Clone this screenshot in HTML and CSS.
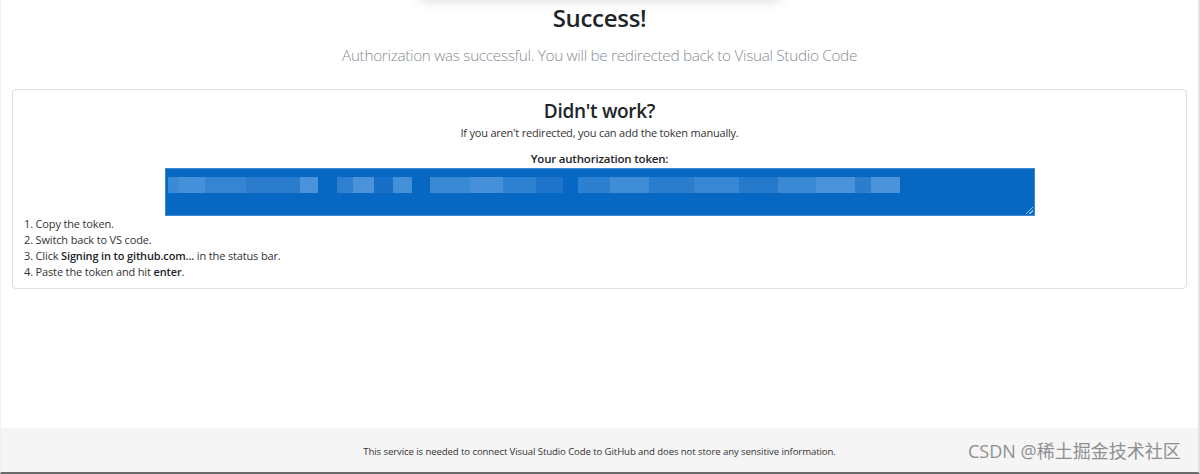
FILE: index.html
```html
<!DOCTYPE html>
<html lang="en">
<head>
<meta charset="utf-8">
<title>Success</title>
<link rel="stylesheet" href="styles.css">
</head>
<body>
<div class="page">
  <div class="top-shadow"></div>
  <main class="main">
    <h1 class="title">Success!</h1>
    <p class="lead">Authorization was successful. You will be redirected back to Visual Studio Code</p>
    <section class="card">
      <h2 class="card-title">Didn't work?</h2>
      <p class="card-sub">If you aren't redirected, you can add the token manually.</p>
      <p class="token-label">Your authorization token:</p>
      <div class="token-box">
        <div class="mosaic">
          <span class="seg seg1"></span>
          <span class="seg seg2"></span>
          <span class="seg seg3"></span>
          <span class="seg seg4"></span>
        </div>
        <span class="grip"></span>
      </div>
      <ol class="steps">
        <li>Copy the token.</li>
        <li>Switch back to VS code.</li>
        <li>Click <b>Signing in to github.com...</b> in the status bar.</li>
        <li>Paste the token and hit <b>enter</b>.</li>
      </ol>
    </section>
  </main>
  <footer class="footer">
    <span class="footer-text">This service is needed to connect Visual Studio Code to GitHub and does not store any sensitive information.</span>
    <span class="watermark">CSDN @稀土掘金技术社区</span>
  </footer>
</div>
</body>
</html>
```

FILE: styles.css
```css
* { box-sizing: border-box; }
html, body { margin: 0; padding: 0; background: #fff; }
body {
  font-family: "Open Sans", "Noto Sans", "Noto Sans CJK SC", sans-serif;
  color: #212529;
  width: 1200px;
  height: 474px;
  overflow: hidden;
}
.page {
  height: 474px;
  display: flex;
  flex-direction: column;
  border-left: 1px solid #f0f0f0;
  border-right: 2px solid #e2e2e2;
  border-bottom: 2px solid #6a6a6a;
}
.top-shadow {
  width: 360px;
  height: 20px;
  margin: -22px auto 0;
  background: #fff;
  box-shadow: 0 3px 12px rgba(0,0,0,0.14);
}
.main { flex: 1; padding: 0 11px; }
.title {
  margin: 4px 0 0;
  text-align: center;
  font-size: 24px;
  line-height: 32px;
  font-weight: 600;
  letter-spacing: -0.3px;
}
.lead {
  margin: 10px 0 0;
  text-align: center;
  font-size: 15.3px;
  line-height: 22px;
  font-weight: 300;
  color: #868e96;
  letter-spacing: -0.3px;
}
.card {
  margin-top: 23px;
  border: 1px solid #dedede;
  border-radius: 4px;
  padding: 9px 11px 8px;
  display: flex;
  flex-direction: column;
  align-items: center;
}
.card-title {
  margin: 0;
  font-size: 19px;
  line-height: 24px;
  font-weight: 600;
  letter-spacing: -0.3px;
}
.card-sub {
  margin: 2px 0 0;
  font-size: 11px;
  line-height: 16px;
  color: #333;
  letter-spacing: -0.2px;
}
.token-label {
  margin: 10px 0 0;
  font-size: 11.5px;
  line-height: 16px;
  font-weight: 600;
  letter-spacing: -0.2px;
}
.token-box {
  position: relative;
  width: 870px;
  height: 48px;
  margin-top: 1px;
  background: #0768c3;
  border: 1px solid #3f87cf;
  padding: 8px 2px 0;
}
.mosaic { display: flex; height: 16px; }
.seg { display: block; height: 16px; }
.seg1 {
  width: 150px;
  background: linear-gradient(90deg, #3b8ad6 0 7%, #4490d9 7% 25%, #3585d3 25% 52%, #2b7ccd 52% 88%, #4a93da 88% 100%);
}
.seg2 {
  width: 75px;
  margin-left: 19px;
  background: linear-gradient(90deg, #2f80d0 0 22%, #4a93da 22% 50%, #1870c6 50% 75%, #4390d9 75% 100%);
}
.seg3 {
  width: 133px;
  margin-left: 18px;
  background: linear-gradient(90deg, #3a89d5 0 30%, #4590d9 30% 55%, #2e80d0 55% 80%, #1e74c9 80% 100%);
}
.seg4 {
  width: 322px;
  margin-left: 15px;
  background: linear-gradient(90deg, #2d7fcf 0 10%, #3f8cd7 10% 22%, #2a7ccd 22% 36%, #3787d4 36% 50%, #2479cb 50% 62%, #3a89d5 62% 74%, #4a93da 74% 86%, #2b7dce 86% 91%, #4b94db 91% 100%);
}
.grip {
  position: absolute;
  right: 1px;
  bottom: 1px;
  width: 7px;
  height: 7px;
  background: linear-gradient(135deg, transparent 0 45%, #9cc3ea 45% 55%, transparent 55% 70%, #9cc3ea 70% 80%, transparent 80%);
}
.steps {
  align-self: stretch;
  margin: 0;
  padding: 0;
  list-style: decimal inside;
  font-size: 11px;
  line-height: 16px;
  color: #333;
  letter-spacing: -0.15px;
}
.steps b { font-weight: 600; color: #212529; }
.footer {
  position: relative;
  height: 44px;
  background: #f5f5f5;
  display: flex;
  align-items: center;
  justify-content: center;
}
.footer-text {
  font-size: 9.6px;
  color: #333;
  letter-spacing: -0.1px;
  padding-top: 2px;
}
.watermark {
  position: absolute;
  left: 967px;
  top: 12px;
  font-size: 18px;
  line-height: 22px;
  color: #8f8f8f;
  white-space: nowrap;
}
```
